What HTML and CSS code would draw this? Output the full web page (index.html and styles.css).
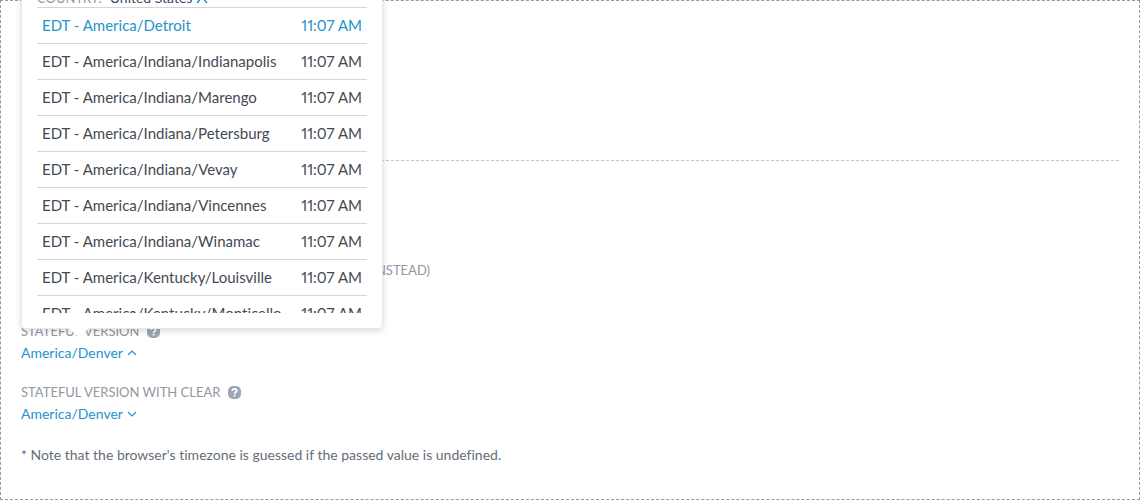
FILE: index.html
```html
<!DOCTYPE html>
<html lang="en">
<head>
<meta charset="utf-8">
<title>Timezone picker</title>
<link rel="stylesheet" href="styles.css">
</head>
<body>
<main class="demo">
  <section class="group group-first"></section>
  <section class="group group-fields">
    <div class="field">
      <div class="label label-end">INSTEAD)</div>
      <div class="value"></div>
    </div>
    <div class="field">
      <div class="label"><span>STATEFUL VERSION</span>
        <svg class="help" viewBox="0 0 13 13" aria-hidden="true"><rect width="13" height="13" rx="5"/><path d="M4.3 5C4.3 3.7 5.2 3 6.5 3S8.7 3.7 8.7 4.8C8.7 6.2 6.6 6.1 6.6 7.8M6.6 8.8V10.4"/></svg>
      </div>
      <button class="value link" type="button" aria-expanded="true">America/Denver
        <svg class="caret" viewBox="0 0 10 6" aria-hidden="true"><path d="M1 5l4-4 4 4"/></svg>
      </button>
      <div class="popover">
        <div class="country"><span class="country-label">COUNTRY:</span><button class="country-value" type="button">United States
          <svg class="caret caret-large" viewBox="0 0 12 8" aria-hidden="true"><path d="M1 7l5-6 5 6"/></svg></button></div>
        <ul class="zones">
          <li><button class="zone zone-active" type="button"><span>EDT - America/Detroit</span><span>11:07 AM</span></button></li>
          <li><button class="zone" type="button"><span>EDT - America/Indiana/Indianapolis</span><span>11:07 AM</span></button></li>
          <li><button class="zone" type="button"><span>EDT - America/Indiana/Marengo</span><span>11:07 AM</span></button></li>
          <li><button class="zone" type="button"><span>EDT - America/Indiana/Petersburg</span><span>11:07 AM</span></button></li>
          <li><button class="zone" type="button"><span>EDT - America/Indiana/Vevay</span><span>11:07 AM</span></button></li>
          <li><button class="zone" type="button"><span>EDT - America/Indiana/Vincennes</span><span>11:07 AM</span></button></li>
          <li><button class="zone" type="button"><span>EDT - America/Indiana/Winamac</span><span>11:07 AM</span></button></li>
          <li><button class="zone" type="button"><span>EDT - America/Kentucky/Louisville</span><span>11:07 AM</span></button></li>
          <li><button class="zone" type="button"><span>EDT - America/Kentucky/Monticello</span><span>11:07 AM</span></button></li>
        </ul>
      </div>
    </div>
    <div class="field">
      <div class="label"><span>STATEFUL VERSION WITH CLEAR</span>
        <svg class="help" viewBox="0 0 13 13" aria-hidden="true"><rect width="13" height="13" rx="5"/><path d="M4.3 5C4.3 3.7 5.2 3 6.5 3S8.7 3.7 8.7 4.8C8.7 6.2 6.6 6.1 6.6 7.8M6.6 8.8V10.4"/></svg>
      </div>
      <button class="value link" type="button" aria-expanded="false">America/Denver
        <svg class="caret" viewBox="0 0 10 6" aria-hidden="true"><path d="M1 1l4 4 4-4"/></svg>
      </button>
    </div>
  </section>
  <p class="note">* Note that the browser's timezone is guessed if the passed value is undefined.</p>
</main>
</body>
</html>
```

FILE: styles.css
```css
* { box-sizing: border-box; }

body {
  margin: 0;
  background: #fff;
  color: #434a54;
  font: 14px/20px Lato, "Open Sans", sans-serif;
  font-variant-ligatures: none;
  font-variant-numeric: proportional-nums;
}

button {
  padding: 0;
  border: 0;
  background: none;
  color: inherit;
  font: inherit;
  font-variant-ligatures: inherit;
  font-variant-numeric: inherit;
  cursor: pointer;
}

.demo {
  min-height: 100vh;
  padding: 20px;
  border: 1px dashed #999;
}

.group-first {
  height: 140px;
  border-bottom: 1px dashed #c3c5ca;
}

.group-fields {
  display: flex;
  flex-direction: column;
  gap: 17px;
  padding-top: 99px;
}

.field { position: relative; }

.label {
  display: flex;
  align-items: center;
  gap: 8px;
  height: 20px;
  color: #93979f;
  font-size: 13px;
}

.label-end {
  justify-content: flex-end;
  max-width: 409px;
}

.value {
  display: flex;
  align-items: center;
  gap: 4px;
  height: 24px;
}

.link { color: #2693cb; }

.help {
  width: 13px;
  height: 13px;
  fill: #9ba7b8;
}

.help path {
  fill: none;
  stroke: #fff;
  stroke-width: 1.8;
}

.caret {
  width: 10px;
  height: 6px;
  fill: none;
  stroke: #2693cb;
  stroke-width: 1.2;
}

.caret-large {
  align-self: flex-end;
  width: 12px;
  height: 8px;
  margin-bottom: 4px;
  stroke-width: 1.5;
}

.popover {
  position: absolute;
  bottom: 36px;
  left: 0;
  width: 362px;
  padding: 15px;
  border: 1px solid #e6e8eb;
  border-radius: 4px;
  background: #fff;
  box-shadow: 0 2px 6px rgba(0, 0, 0, 0.15);
  font-size: 15px;
}

.popover::after {
  content: "";
  position: absolute;
  top: 100%;
  left: 47px;
  border: 10px solid transparent;
  border-top-color: #fff;
  border-bottom: 0;
}

.country {
  display: flex;
  align-items: center;
  gap: 8px;
  height: 20px;
  border-bottom: 1px solid #d3d5d8;
  font-size: 13px;
}

.country-label { color: #93979f; }

.country-value {
  display: flex;
  align-items: center;
  gap: 4px;
  color: #3b4a66;
  font-size: 14px;
}

.zones {
  height: 305px;
  margin: 0;
  padding: 0;
  overflow: hidden;
  list-style: none;
}

.zone {
  display: flex;
  align-items: center;
  justify-content: space-between;
  width: 100%;
  height: 36px;
  padding: 0 5px 2px;
  border-bottom: 1px solid #d3d5d8;
}

.zone-active { color: #2693cb; }

.note {
  margin: 19px 0 0;
  color: #656d78;
}
```
